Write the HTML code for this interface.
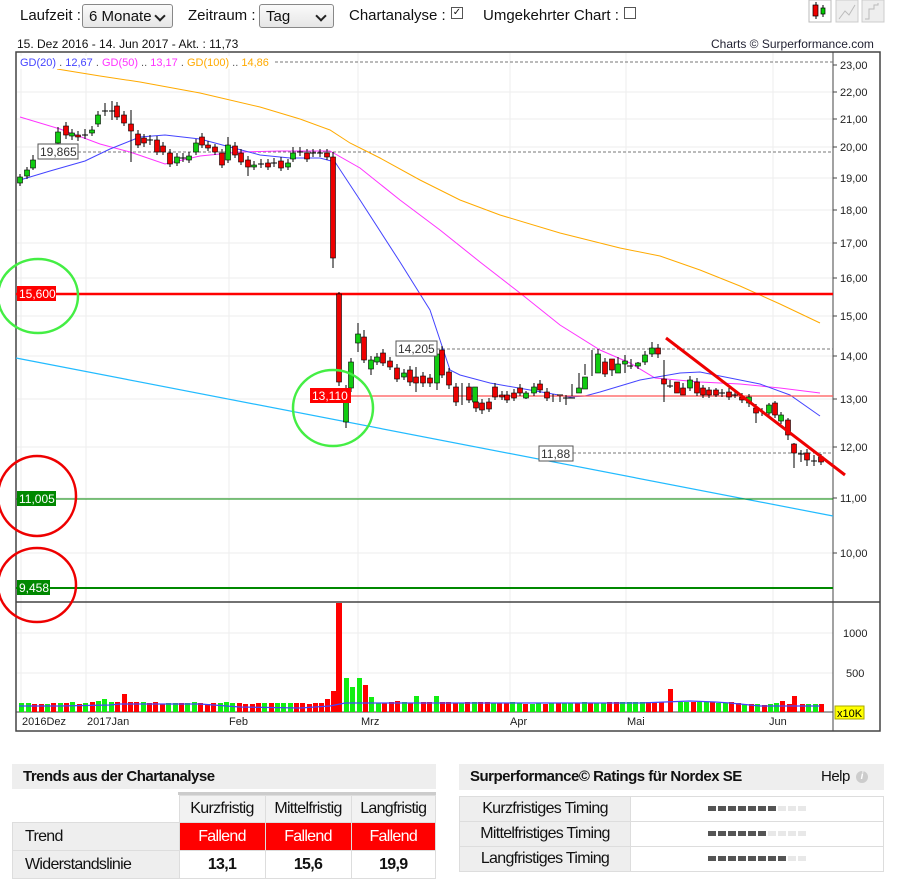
<!DOCTYPE html><html><head><meta charset="utf-8"><style>
body{margin:0;width:898px;height:859px;background:#fff;font-family:"Liberation Sans",sans-serif;position:relative;overflow:hidden;color:#111}
.a{position:absolute;white-space:nowrap}
.sel{position:absolute;border:1px solid #888;border-radius:3px;background:linear-gradient(#fafafa,#e6e6e6);font-size:15px;height:24px;line-height:24px;padding-left:6px;box-sizing:border-box}
.sel:after{content:"";position:absolute;right:8px;top:7px;width:6px;height:6px;border-right:2px solid #222;border-bottom:2px solid #222;transform:rotate(45deg)}
.cb{position:absolute;width:10px;height:10px;border:1px solid #555;background:#fff}
.n{letter-spacing:-0.5px}
table{border-collapse:collapse;position:absolute}
td{font-size:16px;letter-spacing:-0.7px;text-align:center;border:1px solid #ddd;padding:0}
</style></head><body>
<div class="a" style="left:20px;top:7px;font-size:15px">Laufzeit :</div>
<div class="sel" style="left:82px;top:4px;width:91px">6 Monate</div>
<div class="a" style="left:188px;top:7px;font-size:15px">Zeitraum :</div>
<div class="sel" style="left:259px;top:4px;width:75px">Tag</div>
<div class="a" style="left:349px;top:7px;font-size:15px">Chartanalyse :</div>
<div class="cb" style="left:451px;top:7px;font-size:10px;line-height:10px;text-align:center">✓</div>
<div class="a" style="left:483px;top:7px;font-size:15px">Umgekehrter Chart :</div>
<div class="cb" style="left:624px;top:7px"></div>
<svg class="a" style="left:808px;top:0" width="80" height="24">
<rect x="1" y="0" width="22" height="22" fill="#fff" stroke="#bbb"/><line x1="8" y1="2" x2="8" y2="19" stroke="#000"/><rect x="5" y="5" width="5" height="11" fill="#e00" stroke="#000" stroke-width=".7"/><line x1="15" y1="5" x2="15" y2="17" stroke="#000"/><rect x="13" y="8" width="4" height="6" fill="#0c0" stroke="#000" stroke-width=".7"/>
<rect x="28" y="0" width="22" height="22" fill="#eee" stroke="#ccc"/><polyline points="31,19 37,11 41,15 47,5" fill="none" stroke="#bbb"/>
<rect x="54" y="0" width="22" height="22" fill="#eee" stroke="#ccc"/><polyline points="57,19 61,19 61,9 66,9 66,5 70,5 70,3" fill="none" stroke="#bbb"/>
</svg>
<div class="a" style="left:17px;top:37px;font-size:12px">15. Dez 2016 - 14. Jun 2017 - Akt. : 11,73</div>
<div class="a" style="left:711px;top:37px;font-size:12px;color:#223">Charts © Surperformance.com</div>
<svg class="a" style="left:0;top:0" width="898" height="740" font-family="Liberation Sans,sans-serif">
<g stroke="#eee" stroke-width="1">
<line x1="21" y1="53" x2="21" y2="712"/><line x1="86" y1="53" x2="86" y2="712"/><line x1="229" y1="53" x2="229" y2="712"/><line x1="358" y1="53" x2="358" y2="712"/><line x1="510" y1="53" x2="510" y2="712"/><line x1="626" y1="53" x2="626" y2="712"/><line x1="773" y1="53" x2="773" y2="712"/>
<line x1="17" y1="92" x2="833" y2="92"/><line x1="17" y1="119" x2="833" y2="119"/><line x1="17" y1="147" x2="833" y2="147"/><line x1="17" y1="178" x2="833" y2="178"/><line x1="17" y1="210" x2="833" y2="210"/><line x1="17" y1="243" x2="833" y2="243"/><line x1="17" y1="278" x2="833" y2="278"/><line x1="17" y1="316" x2="833" y2="316"/><line x1="17" y1="356" x2="833" y2="356"/><line x1="17" y1="399" x2="833" y2="399"/><line x1="17" y1="447" x2="833" y2="447"/><line x1="17" y1="498" x2="833" y2="498"/><line x1="17" y1="553" x2="833" y2="553"/>
<line x1="17" y1="633" x2="833" y2="633"/><line x1="17" y1="673" x2="833" y2="673"/>
</g>
<rect x="16" y="52" width="864" height="679" fill="none" stroke="#444" stroke-width="1.5"/>
<line x1="16" y1="602" x2="880" y2="602" stroke="#444" stroke-width="1.5"/>
<line x1="16" y1="712" x2="833" y2="712" stroke="#444"/>
<line x1="833" y1="52" x2="833" y2="731" stroke="#444"/>
<g font-size="11" fill="#222">
<text x="840" y="69">23,00</text><text x="840" y="96">22,00</text><text x="840" y="123">21,00</text><text x="840" y="151">20,00</text><text x="840" y="182">19,00</text><text x="840" y="214">18,00</text><text x="840" y="247">17,00</text><text x="840" y="282">16,00</text><text x="840" y="320">15,00</text><text x="840" y="360">14,00</text><text x="840" y="403">13,00</text><text x="840" y="451">12,00</text><text x="840" y="502">11,00</text><text x="840" y="557">10,00</text>
<text x="843" y="637">1000</text><text x="846" y="677">500</text>
<text x="22" y="725">2016Dez</text><text x="87" y="725">2017Jan</text><text x="229" y="725">Feb</text><text x="361" y="725">Mrz</text><text x="510" y="725">Apr</text><text x="627" y="725">Mai</text><text x="769" y="725">Jun</text>
</g>
<g stroke="#444"><line x1="833" y1="65" x2="837" y2="65"/><line x1="833" y1="92" x2="837" y2="92"/><line x1="833" y1="119" x2="837" y2="119"/><line x1="833" y1="147" x2="837" y2="147"/><line x1="833" y1="178" x2="837" y2="178"/><line x1="833" y1="210" x2="837" y2="210"/><line x1="833" y1="243" x2="837" y2="243"/><line x1="833" y1="278" x2="837" y2="278"/><line x1="833" y1="316" x2="837" y2="316"/><line x1="833" y1="356" x2="837" y2="356"/><line x1="833" y1="399" x2="837" y2="399"/><line x1="833" y1="447" x2="837" y2="447"/><line x1="833" y1="498" x2="837" y2="498"/><line x1="833" y1="553" x2="837" y2="553"/></g>
<rect x="835" y="706" width="29" height="13" fill="#ff0" stroke="#aa0"/><text x="837" y="717" font-size="11">x10K</text>
<g stroke="#777" stroke-dasharray="3,2"><line x1="275" y1="62" x2="833" y2="62"/><line x1="78" y1="152" x2="833" y2="152"/><line x1="437" y1="349" x2="833" y2="349"/><line x1="573" y1="453" x2="833" y2="453"/></g>
<polyline fill="none" stroke="#fa0" points="57,69 100,76 140,82 200,93 260,107 300,119 330,130 350,143 380,158 420,180 460,200 500,215 560,233 620,248 660,256 700,270 740,286 780,304 820,323"/>
<polyline fill="none" stroke="#f3f" points="20,117 60,129 100,144 130,152 165,164 200,156 240,152 280,151 330,151 360,168 400,200 440,230 480,262 520,293 560,325 600,350 630,363 655,378 700,382 740,384 780,388 820,393"/>
<polyline fill="none" stroke="#44f" points="20,180 50,171 85,161 110,149 140,137 165,135 200,139 230,147 260,155 290,158 320,158 335,162 360,200 400,262 430,310 450,370 460,375 490,383 530,390 570,397 585,396 600,392 640,380 680,373 700,372 730,378 760,384 790,395 820,416"/>
<line x1="16" y1="358" x2="833" y2="516" stroke="#2bf" stroke-width="1.2"/>
<line x1="16" y1="294" x2="833" y2="294" stroke="#f00" stroke-width="2.5"/>
<line x1="310" y1="396" x2="833" y2="396" stroke="#f55" stroke-width="1.2"/>
<line x1="16" y1="499" x2="833" y2="499" stroke="#080"/>
<line x1="16" y1="588" x2="833" y2="588" stroke="#080" stroke-width="2"/>
<path stroke="#000" fill="none" stroke-width="1" d="M20,174V186M27,167V179M33,155V170M58,127V147M66,122V139M72,129V140M78,131V141M85,129V139M92,126V136M98,111V127M105,103V116M112,101V120M117,102V120M124,111V126M131,110V162M138,130V148M144,134V147M150,135V145M157,136V155M163,142V155M170,149V167M177,153V166M183,153V162M189,152V163M196,139V155M202,133V148M208,141V151M215,144V155M222,149V168M228,137V163M235,142V158M241,149V165M248,156V176M254,161V170M261,159V168M268,159V170M274,158V167M281,157V171M288,159V170M293,147V162M300,147V156M307,149V162M313,149V157M320,149V157M327,149V160M333,152V268M339,292V386M346,385V428M351,358V392M358,323V352M364,330V363M371,356V375M377,353V365M383,349V366M390,357V370M397,364V382M404,369V380M410,366V386M416,367V392M423,372V387M430,374V387M437,348V390M442,346V378M449,368V389M456,383V406M462,383V405M469,383V403M476,398V412M482,399V414M489,398V412M495,383V400M502,391V400M507,391V403M514,389V401M520,384V396M526,391V399M534,383V396M540,380V393M547,388V401M553,394V402M560,396V402M566,395V405M572,384V396M579,373V392M585,364V375M592,350V376M598,349V358M605,358V377M612,360V376M618,357V367M625,355V373M631,359V369M638,362V369M645,351V365M652,342V357M658,344V358M664,360V402M670,380V388M677,382V390M683,383V389M690,376V391M697,378V396M703,385V398M709,387V398M716,388V397M722,389V397M729,388V400M735,392V398M742,393V403M749,394V407M756,404V423M762,408V416M769,403V416M775,401V418M781,412V424M788,418V440M794,443V468M801,450V462M807,449V466M814,455V466M821,454V465"/>
<g stroke="#000" stroke-width=".6">
<g fill="#1c1">
<rect x="17.5" y="177" width="5" height="6"/><rect x="24.5" y="170" width="5" height="6"/><rect x="30.5" y="160" width="5" height="8"/><rect x="55.5" y="132" width="5" height="11"/><rect x="69.5" y="133" width="5" height="3"/><rect x="89.5" y="130" width="5" height="3"/><rect x="95.5" y="115" width="5" height="9"/><rect x="174.5" y="157" width="5" height="6"/><rect x="186.5" y="156" width="5" height="4"/><rect x="193.5" y="143" width="5" height="9"/><rect x="225.5" y="145" width="5" height="15"/><rect x="251.5" y="165" width="5" height="2"/><rect x="285.5" y="163" width="5" height="4"/><rect x="290.5" y="153" width="5" height="6"/>
<rect x="343.5" y="402" width="5" height="20"/><rect x="348.5" y="362" width="5" height="26"/><rect x="355.5" y="334" width="5" height="9"/><rect x="368.5" y="360" width="5" height="9"/><rect x="374.5" y="357" width="5" height="5"/><rect x="401.5" y="373" width="5" height="4"/><rect x="434.5" y="354" width="5" height="29"/><rect x="472.5" y="387" width="5" height="15"/><rect x="523.5" y="393" width="5" height="5"/><rect x="531.5" y="387" width="5" height="6"/><rect x="576.5" y="388" width="5" height="5"/><rect x="582.5" y="377" width="5" height="12"/><rect x="595.5" y="354" width="5" height="19"/><rect x="615.5" y="364" width="5" height="9"/><rect x="622.5" y="361" width="5" height="3"/><rect x="635.5" y="363" width="5" height="3"/><rect x="642.5" y="355" width="5" height="7"/><rect x="649.5" y="348" width="5" height="6"/><rect x="687.5" y="380" width="5" height="8"/><rect x="746.5" y="397" width="5" height="6"/><rect x="766.5" y="405" width="5" height="8"/><rect x="778.5" y="415" width="5" height="6"/>
</g>
<g fill="#e00">
<rect x="63.5" y="126" width="5" height="9"/><rect x="75.5" y="135" width="5" height="2"/><rect x="114.5" y="106" width="5" height="11"/><rect x="121.5" y="115" width="5" height="8"/><rect x="128.5" y="124" width="5" height="7"/><rect x="135.5" y="134" width="5" height="11"/><rect x="141.5" y="138" width="5" height="5"/><rect x="154.5" y="140" width="5" height="12"/><rect x="160.5" y="146" width="5" height="6"/><rect x="167.5" y="153" width="5" height="11"/><rect x="199.5" y="137" width="5" height="8"/><rect x="205.5" y="145" width="5" height="3"/><rect x="212.5" y="147" width="5" height="5"/><rect x="219.5" y="153" width="5" height="12"/><rect x="232.5" y="146" width="5" height="9"/><rect x="238.5" y="153" width="5" height="9"/><rect x="245.5" y="160" width="5" height="7"/><rect x="265.5" y="163" width="5" height="4"/><rect x="278.5" y="161" width="5" height="7"/><rect x="304.5" y="153" width="5" height="6"/><rect x="324.5" y="153" width="5" height="4"/><rect x="330.5" y="157" width="5" height="101"/>
<rect x="336.5" y="294" width="5" height="88"/><rect x="361.5" y="337" width="5" height="23"/><rect x="380.5" y="353" width="5" height="10"/><rect x="387.5" y="361" width="5" height="6"/><rect x="394.5" y="368" width="5" height="11"/><rect x="407.5" y="370" width="5" height="12"/><rect x="413.5" y="377" width="5" height="6"/><rect x="420.5" y="376" width="5" height="7"/><rect x="427.5" y="378" width="5" height="5"/><rect x="439.5" y="350" width="5" height="25"/><rect x="446.5" y="372" width="5" height="13"/><rect x="453.5" y="387" width="5" height="15"/><rect x="466.5" y="387" width="5" height="13"/><rect x="473.5" y="402" width="5" height="6"/><rect x="479.5" y="403" width="5" height="7"/><rect x="486.5" y="402" width="5" height="7"/><rect x="492.5" y="387" width="5" height="10"/><rect x="499.5" y="395" width="5" height="2"/><rect x="504.5" y="395" width="5" height="5"/><rect x="511.5" y="393" width="5" height="5"/><rect x="517.5" y="388" width="5" height="5"/><rect x="537.5" y="384" width="5" height="6"/><rect x="544.5" y="392" width="5" height="6"/><rect x="602.5" y="362" width="5" height="12"/><rect x="609.5" y="359" width="5" height="11"/><rect x="655.5" y="348" width="5" height="6"/><rect x="661.5" y="379" width="5" height="5"/><rect x="674.5" y="382" width="5" height="11"/><rect x="680.5" y="388" width="5" height="7"/><rect x="694.5" y="382" width="5" height="11"/><rect x="700.5" y="388" width="5" height="7"/><rect x="706.5" y="390" width="5" height="5"/><rect x="713.5" y="390" width="5" height="5"/><rect x="726.5" y="392" width="5" height="5"/><rect x="739.5" y="397" width="5" height="3"/><rect x="753.5" y="408" width="5" height="5"/><rect x="772.5" y="403" width="5" height="12"/><rect x="785.5" y="420" width="5" height="15"/><rect x="791.5" y="444" width="5" height="9"/><rect x="804.5" y="453" width="5" height="7"/><rect x="818.5" y="457" width="5" height="5"/>
</g>
</g>
<path stroke="#000" d="M82,135H88M102,111H108M109,111H115M147,140H153M180,158H186M258,164H264M271,163H277M297,152H303M310,153H316M317,153H323M557,395H563M563,398H569M569,398H575M627,366H633M667,386H673M719,393H725M732,395H738M798,454H804M811,461H817"/>
<line x1="666" y1="338" x2="845" y2="475" stroke="#e00" stroke-width="3"/>
<rect x="17" y="56" width="258" height="13" fill="#fff"/>
<text x="20" y="66" font-size="11"><tspan fill="#44f">GD(20)</tspan><tspan fill="#555"> . </tspan><tspan fill="#44f">12,67</tspan><tspan fill="#555"> . </tspan><tspan fill="#f3f">GD(50)</tspan><tspan fill="#555"> .. </tspan><tspan fill="#f3f">13,17</tspan><tspan fill="#555"> . </tspan><tspan fill="#fa0">GD(100)</tspan><tspan fill="#555"> .. </tspan><tspan fill="#fa0">14,86</tspan></text>
<rect x="38" y="144" width="40" height="15" fill="#fff" stroke="#555"/><text x="40" y="156" font-size="12" fill="#333">19,865</text>
<rect x="396" y="341" width="41" height="15" fill="#fff" stroke="#555"/><text x="398" y="353" font-size="12" fill="#333">14,205</text>
<rect x="539" y="446" width="34" height="15" fill="#fff" stroke="#555"/><text x="541" y="458" font-size="12" fill="#333">11,88</text>
<rect x="17" y="286" width="39" height="15" fill="#f00"/><text x="19" y="298" font-size="12" fill="#fff">15,600</text>
<rect x="310" y="388" width="41" height="15" fill="#f00"/><text x="312" y="400" font-size="12" fill="#fff">13,110</text>
<rect x="17" y="491" width="39" height="15" fill="#080"/><text x="19" y="503" font-size="12" fill="#fff">11,005</text>
<rect x="17" y="580" width="33" height="15" fill="#080"/><text x="19" y="592" font-size="12" fill="#fff">9,458</text>
<g fill="none" stroke-width="2.5"><ellipse cx="38" cy="296" rx="40" ry="37" stroke="#4e4"/><ellipse cx="333" cy="408" rx="40" ry="38" stroke="#4e4"/><ellipse cx="37" cy="496" rx="39" ry="40" stroke="#e00"/><ellipse cx="37" cy="585" rx="39" ry="37" stroke="#e00"/></g>
<g fill="#1e1">
<rect x="19" y="703" width="5" height="9"/><rect x="26" y="703" width="5" height="9"/><rect x="45" y="704" width="5" height="8"/><rect x="58" y="703" width="5" height="9"/><rect x="70" y="702" width="5" height="10"/><rect x="83" y="703" width="5" height="9"/><rect x="96" y="701" width="5" height="11"/><rect x="102" y="699" width="5" height="13"/><rect x="109" y="702" width="5" height="10"/><rect x="141" y="702" width="5" height="10"/><rect x="166" y="703" width="5" height="9"/><rect x="173" y="703" width="5" height="9"/><rect x="185" y="703" width="5" height="9"/><rect x="192" y="702" width="5" height="10"/><rect x="218" y="703" width="5" height="9"/><rect x="224" y="702" width="5" height="10"/><rect x="230" y="703" width="5" height="9"/><rect x="262" y="703" width="5" height="9"/><rect x="275" y="703" width="5" height="9"/><rect x="281" y="703" width="5" height="9"/><rect x="288" y="703" width="5" height="9"/><rect x="344" y="678" width="5" height="34"/><rect x="350" y="687" width="5" height="25"/><rect x="357" y="678" width="5" height="34"/><rect x="369" y="697" width="5" height="15"/><rect x="376" y="703" width="5" height="9"/><rect x="402" y="702" width="5" height="10"/><rect x="414" y="696" width="5" height="16"/><rect x="434" y="696" width="5" height="16"/><rect x="459" y="703" width="5" height="9"/><rect x="472" y="702" width="5" height="10"/><rect x="491" y="703" width="5" height="9"/><rect x="510" y="702" width="5" height="10"/><rect x="517" y="703" width="5" height="9"/><rect x="530" y="704" width="5" height="8"/><rect x="536" y="703" width="5" height="9"/><rect x="549" y="703" width="5" height="9"/><rect x="562" y="703" width="5" height="9"/><rect x="568" y="703" width="5" height="9"/><rect x="582" y="702" width="5" height="10"/><rect x="594" y="703" width="5" height="9"/><rect x="601" y="703" width="5" height="9"/><rect x="620" y="702" width="5" height="10"/><rect x="627" y="702" width="5" height="10"/><rect x="633" y="702" width="5" height="10"/><rect x="640" y="702" width="5" height="10"/><rect x="678" y="702" width="5" height="10"/><rect x="684" y="702" width="5" height="10"/><rect x="697" y="702" width="5" height="10"/><rect x="704" y="702" width="5" height="10"/><rect x="716" y="703" width="5" height="9"/><rect x="723" y="703" width="5" height="9"/><rect x="742" y="704" width="5" height="8"/><rect x="755" y="704" width="5" height="8"/><rect x="768" y="704" width="5" height="8"/><rect x="774" y="703" width="5" height="9"/><rect x="806" y="704" width="5" height="8"/><rect x="813" y="704" width="5" height="8"/>
</g>
<g fill="#f00">
<rect x="32" y="704" width="5" height="8"/><rect x="39" y="704" width="5" height="8"/><rect x="51" y="703" width="5" height="9"/><rect x="64" y="703" width="5" height="9"/><rect x="77" y="704" width="5" height="8"/><rect x="90" y="702" width="5" height="10"/><rect x="115" y="702" width="5" height="10"/><rect x="122" y="694" width="5" height="18"/><rect x="128" y="702" width="5" height="10"/><rect x="134" y="702" width="5" height="10"/><rect x="147" y="703" width="5" height="9"/><rect x="153" y="702" width="5" height="10"/><rect x="160" y="704" width="5" height="8"/><rect x="179" y="703" width="5" height="9"/><rect x="198" y="703" width="5" height="9"/><rect x="205" y="704" width="5" height="8"/><rect x="211" y="703" width="5" height="9"/><rect x="237" y="703" width="5" height="9"/><rect x="243" y="704" width="5" height="8"/><rect x="250" y="704" width="5" height="8"/><rect x="256" y="703" width="5" height="9"/><rect x="269" y="703" width="5" height="9"/><rect x="294" y="703" width="5" height="9"/><rect x="300" y="703" width="5" height="9"/><rect x="307" y="704" width="5" height="8"/><rect x="313" y="703" width="5" height="9"/><rect x="319" y="703" width="5" height="9"/><rect x="325" y="699" width="5" height="13"/><rect x="331" y="691" width="5" height="21"/><rect x="336" y="603" width="6" height="109"/><rect x="363" y="685" width="5" height="27"/><rect x="382" y="703" width="5" height="9"/><rect x="389" y="702" width="5" height="10"/><rect x="395" y="701" width="5" height="11"/><rect x="408" y="703" width="5" height="9"/><rect x="421" y="702" width="5" height="10"/><rect x="427" y="702" width="5" height="10"/><rect x="440" y="702" width="5" height="10"/><rect x="446" y="702" width="5" height="10"/><rect x="453" y="703" width="5" height="9"/><rect x="465" y="702" width="5" height="10"/><rect x="478" y="702" width="5" height="10"/><rect x="485" y="702" width="5" height="10"/><rect x="497" y="703" width="5" height="9"/><rect x="504" y="703" width="5" height="9"/><rect x="523" y="704" width="5" height="8"/><rect x="543" y="704" width="5" height="8"/><rect x="556" y="703" width="5" height="9"/><rect x="575" y="703" width="5" height="9"/><rect x="588" y="703" width="5" height="9"/><rect x="607" y="702" width="5" height="10"/><rect x="614" y="702" width="5" height="10"/><rect x="646" y="702" width="5" height="10"/><rect x="652" y="702" width="5" height="10"/><rect x="659" y="702" width="5" height="10"/><rect x="668" y="689" width="5" height="23"/><rect x="691" y="702" width="5" height="10"/><rect x="710" y="702" width="5" height="10"/><rect x="729" y="702" width="5" height="10"/><rect x="736" y="703" width="5" height="9"/><rect x="749" y="704" width="5" height="8"/><rect x="762" y="705" width="5" height="7"/><rect x="780" y="701" width="5" height="11"/><rect x="787" y="704" width="5" height="8"/><rect x="792" y="696" width="5" height="16"/><rect x="800" y="704" width="5" height="8"/><rect x="819" y="704" width="5" height="8"/>
</g>
<polyline fill="none" stroke="#44f" stroke-width="1.2" points="19,706 60,706 110,705 120,704 200,704 240,707 300,708 330,706 345,703 400,703 640,703 690,701 715,702 730,703 760,706 820,706"/>
</svg>
<div class="a n" style="left:12px;top:764px;width:424px;height:25px;background:#eee;font-weight:bold;font-size:15px;line-height:25px;padding-left:11px;box-sizing:border-box">Trends aus der Chartanalyse</div>
<div class="a" style="left:178px;top:792px;width:258px;height:3px;background:#ccc"></div>
<table style="left:12px;top:795px;width:424px">
<tr style="height:27px"><td style="width:166px;border:none;border-bottom:1px solid #ddd"></td><td style="background:#f2f2f2;width:85px">Kurzfristig</td><td style="background:#f2f2f2;width:85px">Mittelfristig</td><td style="background:#f2f2f2">Langfristig</td></tr>
<tr style="height:28px"><td style="background:#eee;text-align:left;padding-left:12px">Trend</td><td style="background:#f00;color:#fff">Fallend</td><td style="background:#f00;color:#fff">Fallend</td><td style="background:#f00;color:#fff">Fallend</td></tr>
<tr style="height:28px"><td style="background:#eee;text-align:left;padding-left:12px">Widerstandslinie</td><td><b>13,1</b></td><td><b>15,6</b></td><td><b>19,9</b></td></tr>
</table>
<div class="a n" style="left:459px;top:764px;width:425px;height:26px;background:#eee;font-weight:bold;font-size:15px;line-height:26px;padding-left:11px;box-sizing:border-box">Surperformance© Ratings für Nordex SE</div>
<div class="a n" style="left:821px;top:768px;font-size:15px">Help</div>
<div class="a" style="left:856px;top:771px;width:12px;height:12px;border-radius:6px;background:#ccc;color:#fff;font-size:10px;line-height:12px;text-align:center;font-style:italic;font-weight:bold">i</div>
<table style="left:459px;top:796px;width:425px">
<tr style="height:25px"><td style="background:#eee;width:170px">Kurzfristiges Timing</td><td><svg width="100" height="8" style="display:block;margin:0 auto"><g fill="#555"><rect x="1" y="1" width="8" height="5"/><rect x="11" y="1" width="8" height="5"/><rect x="21" y="1" width="8" height="5"/><rect x="31" y="1" width="8" height="5"/><rect x="41" y="1" width="8" height="5"/><rect x="51" y="1" width="8" height="5"/><rect x="61" y="1" width="8" height="5"/></g><g fill="#e8e8e8"><rect x="71" y="1" width="8" height="5"/><rect x="81" y="1" width="8" height="5"/><rect x="91" y="1" width="8" height="5"/></g></svg></td></tr>
<tr style="height:25px"><td style="background:#eee">Mittelfristiges Timing</td><td><svg width="100" height="8" style="display:block;margin:0 auto"><g fill="#555"><rect x="1" y="1" width="8" height="5"/><rect x="11" y="1" width="8" height="5"/><rect x="21" y="1" width="8" height="5"/><rect x="31" y="1" width="8" height="5"/><rect x="41" y="1" width="8" height="5"/><rect x="51" y="1" width="8" height="5"/></g><g fill="#e8e8e8"><rect x="61" y="1" width="8" height="5"/><rect x="71" y="1" width="8" height="5"/><rect x="81" y="1" width="8" height="5"/><rect x="91" y="1" width="8" height="5"/></g></svg></td></tr>
<tr style="height:25px"><td style="background:#eee">Langfristiges Timing</td><td><svg width="100" height="8" style="display:block;margin:0 auto"><g fill="#555"><rect x="1" y="1" width="8" height="5"/><rect x="11" y="1" width="8" height="5"/><rect x="21" y="1" width="8" height="5"/><rect x="31" y="1" width="8" height="5"/><rect x="41" y="1" width="8" height="5"/><rect x="51" y="1" width="8" height="5"/><rect x="61" y="1" width="8" height="5"/><rect x="71" y="1" width="8" height="5"/></g><g fill="#e8e8e8"><rect x="81" y="1" width="8" height="5"/><rect x="91" y="1" width="8" height="5"/></g></svg></td></tr>
</table>
</body></html>
